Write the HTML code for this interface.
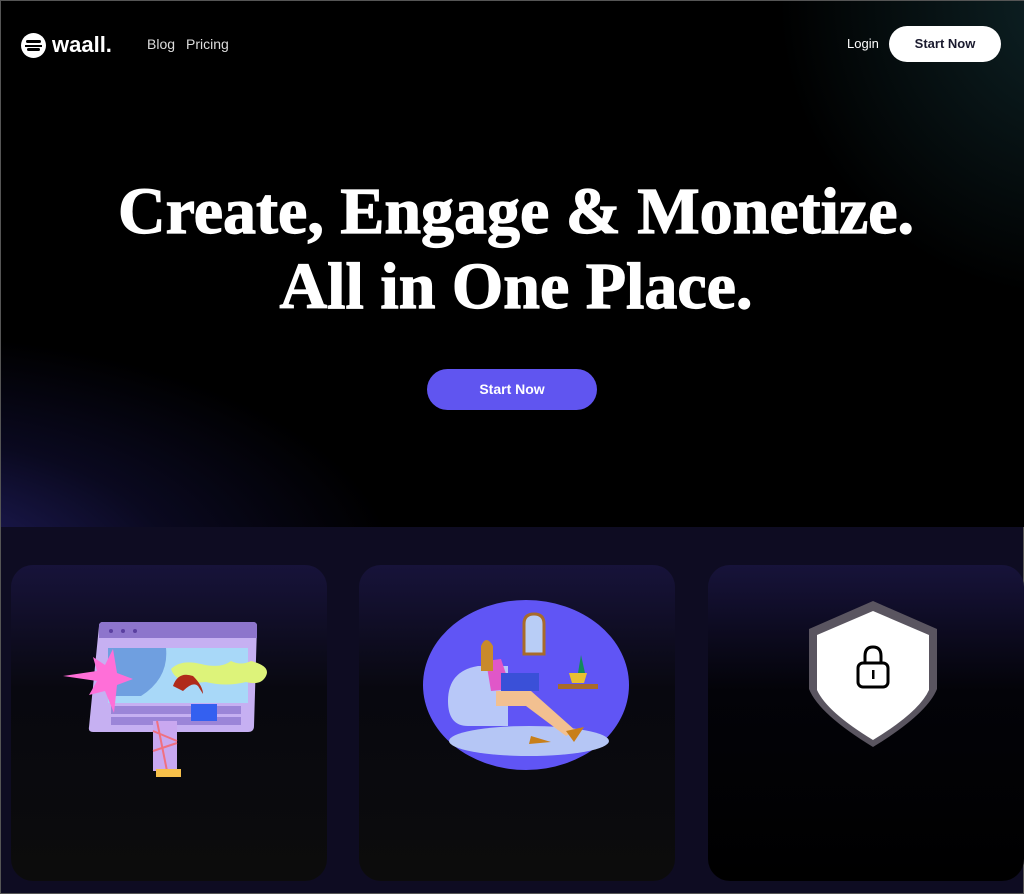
<!DOCTYPE html>
<html><head><meta charset="utf-8"><style>
*{margin:0;padding:0;box-sizing:border-box}
body{width:1024px;height:894px;overflow:hidden;background:#0e0c22;font-family:"Liberation Sans",sans-serif;position:relative;border:1px solid #555}
.hero{position:absolute;left:0;top:0;width:1024px;height:526px;background:#000;overflow:hidden}
.glow1{position:absolute;left:-250px;top:330px;width:650px;height:320px;background:radial-gradient(ellipse at 20% 75%,rgba(42,38,120,.9),rgba(22,20,70,.45) 40%,transparent 70%)}
.glow2{position:absolute;right:-200px;top:-150px;width:500px;height:500px;background:radial-gradient(ellipse at 70% 30%,rgba(20,50,55,.7),transparent 60%)}
.logo{position:absolute;left:20px;top:31px;display:flex;align-items:center;color:#fff;font-weight:bold;font-size:22px}
.logo .c{width:25px;height:25px;border-radius:50%;background:#fff;margin-right:6px;position:relative}
.nav{position:absolute;top:35px;color:#ddd;font-size:14px}
.login{position:absolute;left:846px;top:35px;color:#fff;font-size:13px}
.btnw{position:absolute;left:888px;top:25px;width:112px;height:36px;border-radius:18px;background:#fff;color:#1a1a2e;font-size:13px;font-weight:bold;text-align:center;line-height:36px}
h1{position:absolute;left:0;width:1030px;top:173px;text-align:center;color:#fff;font-family:"Liberation Serif",serif;font-weight:bold;font-size:66px;line-height:75px;-webkit-text-stroke:1.2px #fff}
.cta{position:absolute;left:426px;top:368px;width:170px;height:41px;border-radius:21px;background:#6055f0;color:#fff;font-size:14px;font-weight:bold;text-align:center;line-height:41px}
.card{position:absolute;top:564px;width:316px;height:316px;border-radius:22px;background:linear-gradient(#17133a,#08080f 40%,#0c0c0c)}
</style></head><body>
<div class="hero"><div class="glow1"></div><div class="glow2"></div>
<div class="logo"><div class="c"><div style="position:absolute;left:5px;top:7px;width:15px;height:3px;background:#000;border-radius:2px"></div><div style="position:absolute;left:4px;top:12px;width:17px;height:2px;background:#000"></div><div style="position:absolute;left:6px;top:15px;width:13px;height:3px;background:#000;border-radius:2px"></div></div>waall.</div>
<div class="nav" style="left:146px">Blog</div><div class="nav" style="left:185px">Pricing</div>
<div class="login">Login</div><div class="btnw">Start Now</div>
<h1>Create, Engage &amp; Monetize.<br>All in One Place.</h1>
<div class="cta">Start Now</div>
</div>
<div class="card" style="left:10px">
<svg width="316" height="316" viewBox="10 564 316 316">
<path d="M102 621h150q4 0 4 4l-3 100q0 6-6 6H92q-5 0-4-5l10-101q0-4 4-4z" fill="#c6b0f2"/>
<path d="M102 621h150q4 0 4 4v12H98l0-12q0-4 4-4z" fill="#8d75cc"/>
<circle cx="110" cy="630" r="2" fill="#5a3fa0"/><circle cx="122" cy="630" r="2" fill="#5a3fa0"/><circle cx="134" cy="630" r="2" fill="#5a3fa0"/>
<rect x="107" y="647" width="140" height="55" fill="#a8d8f8"/>
<path d="M107 647h58q3 30-25 48h-33z" fill="#6f9fe0"/>
<rect x="110" y="705" width="130" height="8" fill="#9b85d8"/><rect x="110" y="716" width="130" height="8" fill="#9b85d8"/>
<path d="M170 668q10-10 30-5t30-3q10 5 20 0q20 5 15 15q-5 10-20 6q-20 5-40 0q-30 3-35-13z" fill="#ddf37a"/>
<polygon points="112,648 116,672 132,678 116,684 113,712 104,690 88,694 96,680 62,675 96,670 92,656 104,664" fill="#ff6fd8"/>
<path d="M172 685q5-15 20-10q10 10 10 18l-5-8q-5-5-15 5z" fill="#b02a1a"/>
<rect x="152" y="720" width="24" height="50" fill="#c9a8f0"/>
<path d="M152 730l24 10M152 750l24-8M156 720l10 50" stroke="#f07080" stroke-width="2"/>
<rect x="155" y="768" width="25" height="8" fill="#f7c04a"/>
<rect x="190" y="703" width="26" height="17" fill="#3460f0"/>
</svg></div>
<div class="card" style="left:358px">
<svg width="316" height="316" viewBox="358 564 316 316">
<ellipse cx="525" cy="684" rx="103" ry="85" fill="#6055f5"/>
<path d="M523 653v-30q0-10 10-10t10 10v30z" fill="#b8cdf6" stroke="#a86b2a" stroke-width="3"/>
<ellipse cx="528" cy="740" rx="80" ry="15" fill="#b5c6f5"/>
<path d="M447 700q0-30 30-35h30v60h-40q-20 0-20-25z" fill="#b8c8f8"/>
<path d="M485 660l15-2 10 30-20 2z" fill="#e057c8"/>
<path d="M480 645q5-12 12 0v25h-12z" fill="#c98a2a"/>
<path d="M495 690l35 0 45 40-10 5-40-30h-30z" fill="#f2c090"/>
<rect x="500" y="672" width="38" height="18" fill="#3a50d8"/>
<rect x="557" y="683" width="40" height="5" fill="#a86b2a"/>
<path d="M568 672h18l-3 10h-12z" fill="#e8c030"/><path d="M577 672l3-18 4 18z" fill="#118a5a"/>
<path d="M530 735l20 6-22 2zM565 730l18-4-10 15z" fill="#c87f1a"/>
</svg></div>
<div class="card" style="left:707px;background:linear-gradient(#17133a,#030308 40%,#000)">
<svg width="316" height="316" viewBox="707 564 316 316">
<path d="M872 600l64 28v60q-10 25-64 58q-54-33-64-58v-60z" fill="#5a5560"/>
<path d="M872 610l56 24v55q-10 22-56 50q-46-28-56-50v-55z" fill="#fff"/>
<path d="M864 662v-7q0-9 8-9t8 9v7" fill="none" stroke="#000" stroke-width="3"/>
<rect x="857" y="662" width="30" height="24" rx="5" fill="none" stroke="#000" stroke-width="3"/>
<rect x="871" y="669" width="2.5" height="9" fill="#000"/>
</svg></div>
</body></html>
